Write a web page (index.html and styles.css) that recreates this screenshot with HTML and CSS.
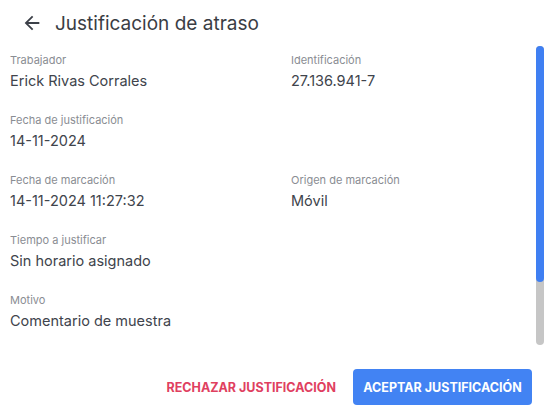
FILE: index.html
```html
<!DOCTYPE html>
<html lang="es">
<head>
    <meta charset="UTF-8">
    <meta name="viewport" content="width=device-width, initial-scale=1.0">
    <title>Justificación de atraso</title>
    <link rel="stylesheet" href="styles.css">
</head>
<body>
    <div class="dialog">
        <div class="header">
            <button class="back" type="button" aria-label="Volver">
                <svg width="18" height="18" viewBox="0 0 24 24"><path d="M20 11H7.83l5.59-5.59L12 4l-8 8 8 8 1.41-1.41L7.83 13H20v-2z" fill="#3c4048"/></svg>
            </button>
            <h1>Justificación de atraso</h1>
        </div>
        <div class="content">
            <div class="grid">
                <div class="field">
                    <div class="label">Trabajador</div>
                    <div class="value">Erick Rivas Corrales</div>
                </div>
                <div class="field">
                    <div class="label">Identificación</div>
                    <div class="value">27.136.941-7</div>
                </div>
                <div class="field">
                    <div class="label">Fecha de justificación</div>
                    <div class="value">14-11-2024</div>
                </div>
                <div class="field"></div>
                <div class="field">
                    <div class="label">Fecha de marcación</div>
                    <div class="value">14-11-2024 11:27:32</div>
                </div>
                <div class="field">
                    <div class="label">Origen de marcación</div>
                    <div class="value">Móvil</div>
                </div>
                <div class="field">
                    <div class="label">Tiempo a justificar</div>
                    <div class="value">Sin horario asignado</div>
                </div>
                <div class="field"></div>
                <div class="field">
                    <div class="label">Motivo</div>
                    <div class="value">Comentario de muestra</div>
                </div>
            </div>
            <div class="scrollbar">
                <div class="thumb" style="height: 79%;"></div>
            </div>
        </div>
        <div class="footer">
            <button type="button" class="btn-reject">Rechazar justificación</button>
            <button type="button" class="btn-accept">Aceptar justificación</button>
        </div>
    </div>
</body>
</html>
```

FILE: styles.css
```css
body {
    margin: 0;
    font-family: Inter, "Open Sans", sans-serif;
    background: #fff;
    color: #3c4048;
}
.dialog {
    width: 549px;
    height: 417px;
    display: flex;
    flex-direction: column;
}
.header {
    height: 46px;
    display: flex;
    align-items: center;
    padding-left: 21px;
    box-sizing: border-box;
}
.back {
    border: none;
    background: none;
    padding: 0;
    width: 22px;
    height: 22px;
    display: flex;
    align-items: center;
    justify-content: center;
    margin-right: 12px;
}
.back svg {
    width: 22px;
    height: 22px;
}
h1 {
    margin: 0;
    font-size: 19px;
    font-weight: 400;
    color: #3a3d44;
}
.content {
    height: 299px;
    display: flex;
    overflow: hidden;
}
.grid {
    flex: 1;
    display: grid;
    grid-template-columns: 281px 1fr;
    grid-auto-rows: 60px;
    padding: 6px 0 0 10px;
}
.scrollbar {
    width: 8px;
    margin-right: 5px;
    background: #c6c6c6;
    border-radius: 4px;
}
.thumb {
    background: #3f7ff2;
    border-radius: 4px;
}
.label {
    font-size: 11px;
    line-height: 16px;
    color: #8a8d93;
}
.value {
    margin-top: 2px;
    font-size: 14.5px;
    line-height: 22px;
    color: #40444c;
}
.footer {
    flex: 1;
    display: flex;
    justify-content: flex-end;
    align-items: flex-end;
    gap: 17px;
    padding: 0 17px 12px 0;
}
.footer button {
    font-family: inherit;
    font-size: 12.5px;
    font-weight: 700;
    text-transform: uppercase;
    height: 36px;
    border: none;
    border-radius: 4px;
    cursor: pointer;
}
.btn-reject {
    background: none;
    color: #e0405f;
    padding: 0;
}
.btn-accept {
    background: #4283f3;
    color: #fff;
    padding: 0 9px;
    width: 179px;
}
```
